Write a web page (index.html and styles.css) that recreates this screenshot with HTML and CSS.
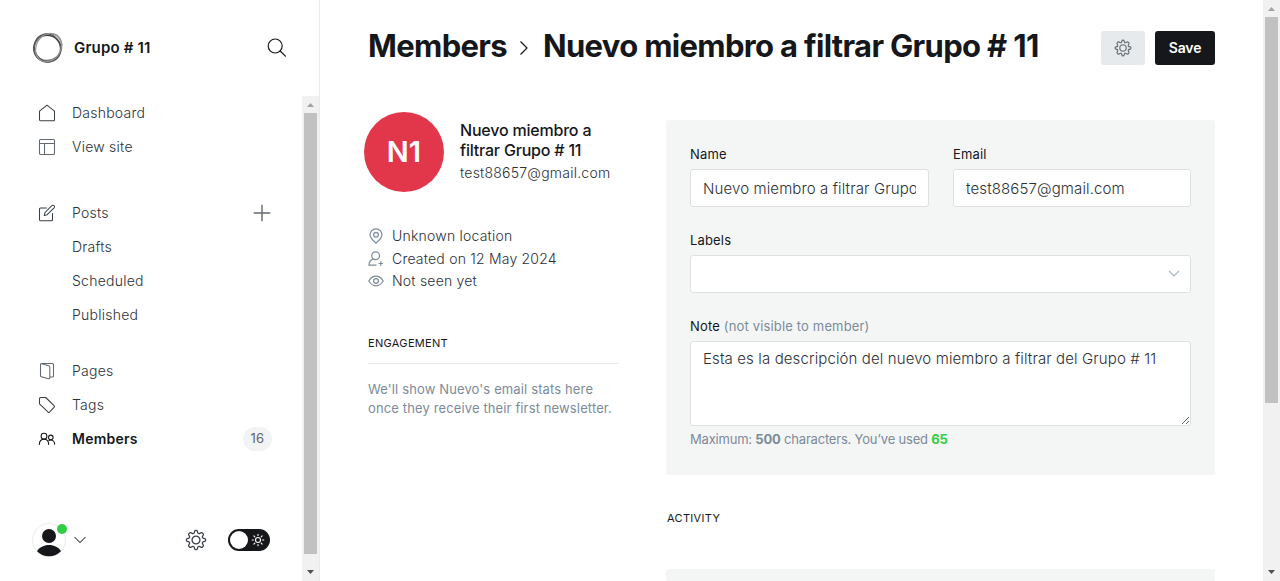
FILE: index.html
```html
<!DOCTYPE html>
<html lang="en">
<head>
<meta charset="utf-8">
<title>Members</title>
<link rel="stylesheet" href="styles.css">
</head>
<body>
<div class="app">
  <aside class="sidebar">
    <header class="brand">
      <svg class="brand-logo" width="32" height="32" viewBox="0 0 32 32" fill="none">
        <circle cx="15.200" cy="16.600" r="13.400" stroke="#3f4143" stroke-width="1.500"/>
        <ellipse cx="16.700" cy="15.300" rx="14.200" ry="12.900" stroke="#777" stroke-width="1.200" transform="rotate(-38 16 16)"/>
        <ellipse cx="15.700" cy="16.200" rx="14.200" ry="13" stroke="#555" stroke-width="1.200" transform="rotate(60 16 16)"/>
        <ellipse cx="16.700" cy="16.200" rx="14.900" ry="12.200" stroke="#999" stroke-width="1.200" transform="rotate(-58 16 16)"/>
      </svg>
      <span class="brand-name">Grupo # 11</span>
      <svg class="search" width="20" height="20" viewBox="0 0 20 20" fill="none" stroke="#15171a" stroke-width="1.200" stroke-linecap="round"><circle cx="8.200" cy="8" r="7"/><path d="M13.200 13l5.200 5.200"/></svg>
    </header>
    <div class="sidebar-body">
      <div class="sidebar-content">
        <nav class="nav">
          <div class="nav-group">
            <a class="nav-item"><svg class="nav-icon" viewBox="0 0 18 18"><path d="M1.500 7.200L9 1.200l7.500 6v8.500a1 1 0 0 1-1 1h-13a1 1 0 0 1-1-1z"/></svg><span>Dashboard</span></a>
            <a class="nav-item nav-soft"><svg class="nav-icon" viewBox="0 0 18 18"><rect x="1.500" y="1.500" width="15" height="15" rx="1"/><path d="M1.500 5.500h15M6.500 5.500v11"/></svg><span>View site</span></a>
          </div>
          <div class="nav-group nav-group-posts">
            <a class="nav-item"><svg class="nav-icon" viewBox="0 0 18 18"><path d="M8.500 4H2.500a1 1 0 0 0-1 1v10.700a1 1 0 0 0 1 1h11a1 1 0 0 0 1-1V9.500M7 8.500l6.800-6.800a1.450 1.450 0 0 1 2.300 2.100L9.200 10.700l-2.900.8z"/></svg><span>Posts</span><svg class="plus" width="18" height="18" viewBox="0 0 18 18"><path d="M9 .7v16.600M.7 9h16.600"/></svg></a>
            <a class="nav-item nav-sub"><span>Drafts</span></a>
            <a class="nav-item nav-sub"><span>Scheduled</span></a>
            <a class="nav-item nav-sub"><span>Published</span></a>
          </div>
          <div class="nav-group">
            <a class="nav-item nav-soft"><svg class="nav-icon" viewBox="0 0 18 18"><path d="M2.500 2.500v11.200a1 1 0 0 0 .8 1l7.200 2a1 1 0 0 0 1.300-1V5a1.400 1.400 0 0 0-1-1.300L3.500 1.800M2.500 2.500a1 1 0 0 1 1-1h11a1 1 0 0 1 1 1V14a1 1 0 0 1-1 1h-2.500"/></svg><span>Pages</span></a>
            <a class="nav-item"><svg class="nav-icon" viewBox="0 0 18 18"><path d="M1.500 2.500a1 1 0 0 1 1-1h5.200l8.500 8.300a1 1 0 0 1 0 1.400l-4.700 5a1 1 0 0 1-1.400 0L1.500 7.900z"/></svg><span>Tags</span></a>
            <a class="nav-item nav-active"><svg class="nav-icon" viewBox="0 0 18 18"><circle cx="6" cy="6.200" r="2.900"/><path d="M1.300 14.500c0-3 1.900-5.200 4.700-5.200s4.700 2.200 4.700 5.200"/><circle cx="12.800" cy="7.400" r="2.300"/><path d="M10.800 10.600c3.200-1.600 5.900.4 5.900 3.700"/></svg><span>Members</span><span class="count">16</span></a>
          </div>
        </nav>
        <footer class="account">
          <div class="avatar">
            <svg width="34" height="34" viewBox="0 0 34 34"><circle cx="17" cy="17" r="16.500" fill="#fff" stroke="#e9ebed"/><circle cx="17" cy="13" r="7" fill="#15171a"/><path d="M5 28.200c2.400-3.900 6.800-6.200 12-6.200s9.600 2.300 12 6.200C26 31.300 21.800 33.200 17 33.200S8 31.300 5 28.200z" fill="#15171a"/></svg>
            <span class="status"></span>
          </div>
          <svg class="caret" width="12" height="8" viewBox="0 0 12 8"><path d="M.5 1L6 6.500 11.500 1"/></svg>
          <svg class="gear" width="22" height="22" viewBox="0 0 24 24"><use href="#gear-shape"/></svg>
          <div class="toggle"><span class="knob"></span>
            <svg width="14" height="14" viewBox="0 0 14 14" fill="none" stroke="#fff" stroke-width="1.100" stroke-linecap="round"><circle cx="7" cy="7" r="2.500"/><path d="M7 1.200v1.300M7 11.500v1.300M1.200 7h1.300M11.500 7h1.300M2.900 2.900l.9.9M10.200 10.200l.9.9M2.900 11.100l.9-.9M10.200 3.800l.9-.9"/></svg>
          </div>
        </footer>
      </div>
      <div class="scrollbar">
        <svg width="17" height="17" viewBox="0 0 17 17"><path d="M5 11h7L8.500 7z" fill="#a3a3a3"/></svg>
        <span class="thumb"></span>
        <svg class="down" width="17" height="17" viewBox="0 0 17 17"><path d="M5 6h7L8.500 10z" fill="#505050"/></svg>
      </div>
    </div>
  </aside>

  <main class="main">
    <header class="page-head">
      <h1 class="title"><span>Members</span><svg width="10" height="16" viewBox="0 0 10 16"><path d="M1.500 1.500L8 8l-6.500 6.500"/></svg><span class="title-name">Nuevo miembro a filtrar Grupo # 11</span></h1>
      <button class="btn btn-gear"><svg class="gear" width="18" height="18" viewBox="0 0 24 24"><path id="gear-shape" d="M10.550 2.420C10.850 1.100 13.150 1.100 13.450 2.420L13.780 3.780C14.050 4.900 15.250 5.400 16.250 4.800L17.420 4.080C18.650 3.400 20.600 5.350 19.920 6.580L19.200 7.750C18.600 8.750 19.100 9.950 20.220 10.220L21.580 10.550C22.900 10.850 22.900 13.150 21.580 13.450L20.220 13.780C19.100 14.050 18.600 15.250 19.200 16.250L19.920 17.420C20.600 18.650 18.650 20.600 17.420 19.920L16.250 19.200C15.250 18.600 14.050 19.100 13.780 20.220L13.450 21.580C13.150 22.900 10.850 22.900 10.550 21.580L10.220 20.220C9.950 19.100 8.750 18.600 7.750 19.200L6.580 19.920C5.350 20.600 3.400 18.650 4.080 17.420L4.800 16.250C5.400 15.250 4.900 14.050 3.780 13.780L2.420 13.450C1.100 13.150 1.100 10.850 2.420 10.550L3.780 10.220C4.900 9.950 5.400 8.750 4.800 7.750L4.080 6.580C3.400 5.350 5.350 3.400 6.580 4.080L7.750 4.800C8.750 5.400 9.950 4.900 10.220 3.780ZM16.300 12A4.300 4.300 0 1 0 7.700 12A4.300 4.300 0 1 0 16.300 12Z"/></svg></button>
      <button class="btn btn-save">Save</button>
    </header>

    <div class="columns">
      <section class="profile">
        <div class="person">
          <div class="initials">N1</div>
          <div class="person-text">
            <h3 class="person-name">Nuevo miembro a<br>filtrar Grupo # 11</h3>
            <p class="person-email">test88657@gmail.com</p>
          </div>
        </div>
        <ul class="facts">
          <li><svg viewBox="0 0 16 16"><path d="M14 6.800c0 3.400-3.300 6-6 8.300C5.300 12.800 2 10.200 2 6.800a6 6 0 0 1 12 0z"/><circle cx="8" cy="6.700" r="2.400"/></svg><span>Unknown location</span></li>
          <li><svg viewBox="0 0 16 16"><circle cx="7.600" cy="4.700" r="3.900"/><path d="M5.200 8.100C2.500 9 1 11 1 14.200h7.500M12.800 10.200v4.600M10.500 12.500h4.600"/></svg><span>Created on 12 May 2024</span></li>
          <li><svg viewBox="0 0 16 16"><path d="M.8 8C2.600 5 5 3.200 8 3.200S13.400 5 15.200 8C13.400 11 11 12.800 8 12.800S2.600 11 .8 8z"/><circle cx="8" cy="8" r="2.400"/></svg><span>Not seen yet</span></li>
        </ul>
        <h4 class="section-title engagement">Engagement</h4>
        <p class="hint">We'll show Nuevo's email stats here<br>once they receive their first newsletter.</p>
      </section>

      <section class="details">
        <form class="card">
          <div class="field-row">
            <label class="field"><span class="label">Name</span><input class="input" type="text" value="Nuevo miembro a filtrar Grupo # 11"></label>
            <label class="field"><span class="label">Email</span><input class="input" type="text" value="test88657@gmail.com"></label>
          </div>
          <div class="field"><span class="label">Labels</span><div class="input select"><svg width="12" height="8" viewBox="0 0 12 8"><path d="M1 1l5 5 5-5"/></svg></div></div>
          <label class="field note"><span class="label">Note <span class="muted">(not visible to member)</span></span><textarea class="input area">Esta es la descripción del nuevo miembro a filtrar del Grupo # 11</textarea></label>
          <p class="counter">Maximum: <b>500</b> characters. You’ve used <b class="used">65</b></p>
        </form>
        <h4 class="section-title activity">Activity</h4>
        <div class="activity-card"></div>
      </section>
    </div>
  </main>
  <div class="scrollbar page-scroll">
    <svg width="17" height="17" viewBox="0 0 17 17"><path d="M5 11h7L8.500 7z" fill="#a3a3a3"/></svg>
    <span class="thumb"></span>
    <svg class="down" width="17" height="17" viewBox="0 0 17 17"><path d="M5 6h7L8.500 10z" fill="#505050"/></svg>
  </div>
</div>
</body>
</html>
```
FILE: styles.css
```css
* { box-sizing: border-box; }
body { margin: 0; background: #fff; color: #15171a; font-family: Inter, sans-serif; font-size: 14px; overflow: hidden; }
h1, h3, h4, p, ul { margin: 0; padding: 0; }
svg { display: block; flex: none; }
.app { display: flex; height: 581px; overflow: hidden; }

.sidebar { flex: none; width: 320px; display: flex; flex-direction: column; border-right: 1px solid #e9ebed; }
.brand { flex: none; height: 96px; padding: 0 32px; display: flex; align-items: center; }
.brand-logo { margin-right: 10px; }
.brand-name { font-size: 15px; font-weight: 600; letter-spacing: .17px; white-space: nowrap; padding-bottom: 2px; }
.search { margin-left: auto; }
.sidebar-body { flex: 1; display: flex; min-height: 0; }
.sidebar-content { flex: 1; display: flex; flex-direction: column; justify-content: space-between; }
.nav-group { margin-bottom: 22px; }
.nav-group:first-child { margin-bottom: 32px; }
.nav-item { display: flex; align-items: center; height: 34px; padding: 0 30px 0 38px; color: #2b3137; font-size: 14px; font-weight: 300; letter-spacing: .24px; }
.nav-item > span { padding-bottom: 2px; }
.nav-icon { width: 18px; height: 18px; margin-right: 16px; fill: none; stroke: #394047; stroke-width: 1.05; stroke-linejoin: round; stroke-linecap: round; }
.nav-soft .nav-icon { stroke: #626970; }
.nav-sub { padding-left: 72px; }
.nav-active { color: #15171a; font-weight: 600; }
.nav-active .nav-icon { stroke: #15171a; }
.plus { margin-left: auto; margin-right: 1px; stroke: #626970; stroke-width: 1.4; }
.count { margin-left: auto; min-width: 29px; height: 24px; border-radius: 12px; background: #f1f3f4; color: #5d666f; font-size: 13px; font-weight: 400; line-height: 23px; text-align: center; letter-spacing: .4px; }
.account { width: 302px; height: 82px; padding: 0 32px; display: flex; align-items: center; }
.avatar { position: relative; }
.status { position: absolute; top: 1px; right: -1px; width: 10px; height: 10px; border-radius: 50%; background: #30cf43; }
.caret { margin-left: 8px; fill: none; stroke: #394047; stroke-width: 1.05; }
.gear { fill: none; stroke: #394047; stroke-width: 1.4; stroke-linejoin: round; }
.account .gear { margin-left: auto; margin-right: 21px; }
.toggle { width: 42px; height: 22px; border-radius: 11px; background: #15171a; padding: 0 5px 0 2px; display: flex; align-items: center; justify-content: space-between; }
.knob { width: 18px; height: 18px; border-radius: 50%; background: #fff; }

.scrollbar { flex: none; width: 17px; background: #f1f1f1; display: flex; flex-direction: column; align-items: center; }
.thumb { width: 13px; height: 441px; background: #c1c1c1; }
.page-scroll .thumb { height: 386px; }
.down { margin-top: auto; }

.main { flex: 1; min-width: 0; padding: 0 48px; }
.page-head { display: flex; align-items: center; height: 96px; gap: 10px; }
.title { flex: 1; display: flex; align-items: center; font-size: 31px; font-weight: 600; line-height: 36px; letter-spacing: -.67px; white-space: nowrap; padding-bottom: 4px; }
.title svg { margin: 4px 14px 0 12px; fill: none; stroke: #15171a; stroke-width: 1.2; }
.title { font-weight: 700; }
.btn { height: 34px; border: 0; border-radius: 3px; padding: 0; font-family: inherit; }
.btn-gear { width: 44px; background: #e6eaed; display: flex; align-items: center; justify-content: center; }
.btn-gear .gear { stroke: #626970; stroke-width: 1.5; }
.btn-save { width: 60px; padding-bottom: 2px; background: #15171a; color: #fff; font-size: 14px; font-weight: 600; letter-spacing: -.1px; }
.columns { display: grid; grid-template-columns: 250px 549px; gap: 48px; }

.profile { padding-top: 16px; }
.person { display: flex; gap: 16px; margin-left: -4px; white-space: nowrap; }
.initials { width: 80px; height: 80px; padding-bottom: 2px; border-radius: 50%; background: #e2374b; color: #fff; display: flex; align-items: center; justify-content: center; font-size: 29px; font-weight: 600; }
.person-text { padding-top: 8px; }
.person-name { font-size: 16px; font-weight: 500; line-height: 20px; letter-spacing: -.2px; }
.person-email { font-size: 14px; font-weight: 300; line-height: 20px; margin-top: 3px; letter-spacing: .23px; color: #2b3137; }
.facts { list-style: none; margin-top: 33px; }
.facts li { display: flex; align-items: center; gap: 8px; height: 22.5px; font-size: 14px; font-weight: 300; letter-spacing: .21px; color: #2b3137; }
.facts span { padding-bottom: 1px; }
.facts svg { width: 16px; height: 16px; fill: none; stroke: #7c8b9a; stroke-width: 1.2; }
.section-title { font-size: 11px; font-weight: 400; line-height: 16px; letter-spacing: .32px; text-transform: uppercase; }
.engagement { margin-top: 42px; padding-bottom: 12px; border-bottom: 1px solid #e6e9eb; }
.hint { margin-top: 16px; color: #7c8b9a; font-size: 13px; line-height: 19px; letter-spacing: .13px; white-space: nowrap; }

.details { padding-top: 24px; }
.card { height: 355px; padding: 24px; background: #f4f6f6; border-radius: 3px; }
.field-row { display: grid; grid-template-columns: 239px 238px; gap: 24px; }
.field { display: block; margin-bottom: 23px; }
.label { display: block; height: 25px; line-height: 20px; font-size: 13px; letter-spacing: .16px; }
.muted { color: #7c8b9a; }
.input { display: block; width: 100%; height: 38px; padding: 0 12px; border: 1px solid #dde1e1; border-radius: 3px; background: #fff; color: #2b3137; font-family: inherit; font-size: 15px; font-weight: 300; letter-spacing: .12px; outline: 0; }
.select { display: flex; align-items: center; justify-content: flex-end; padding-right: 10px; }
.select svg { fill: none; stroke: #abb4be; stroke-width: 1.1; }
.note { margin-bottom: 0; }
.area { height: 85px; padding: 6px 12px; line-height: 22px; resize: vertical; }
.counter { margin-top: 3px; font-size: 13px; line-height: 20px; letter-spacing: -.2px; color: #7c8b9a; }
.used { color: #30cf43; }
.activity { margin-top: 35px; margin-left: 1px; }
.activity-card { margin-top: 43px; height: 120px; background: #f4f6f6; border-radius: 3px; }
```
